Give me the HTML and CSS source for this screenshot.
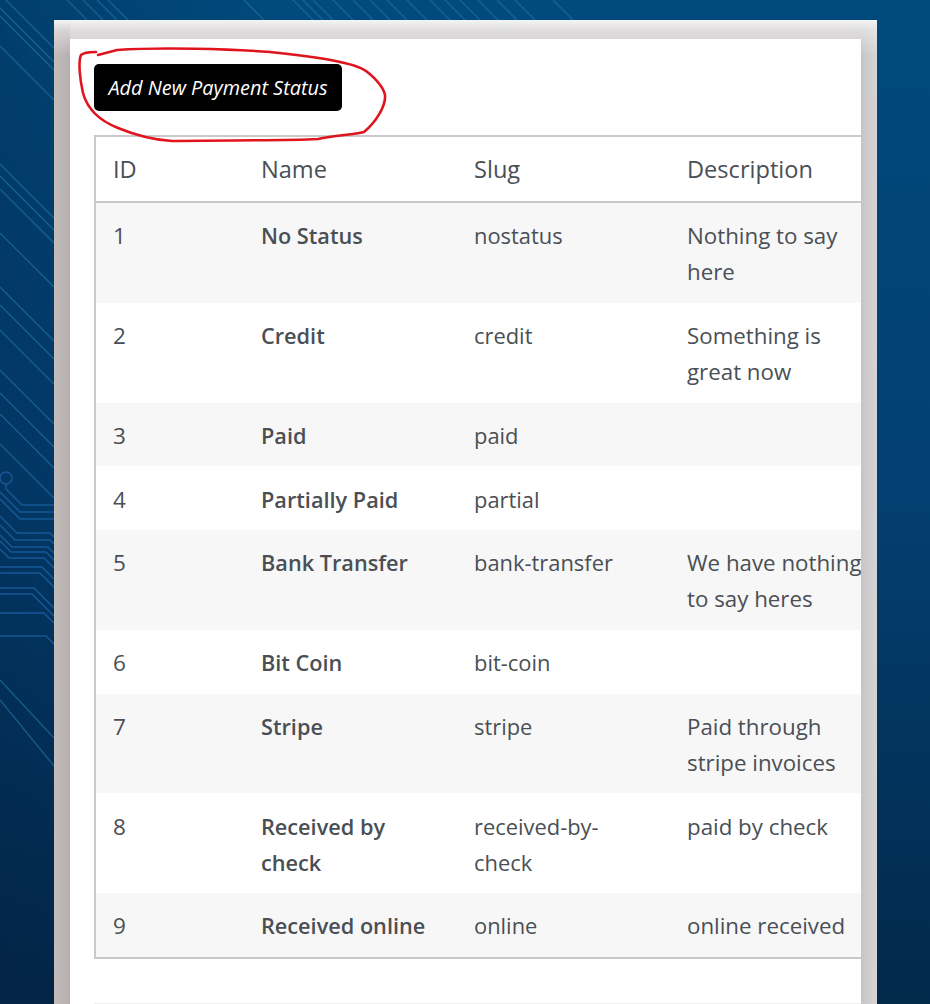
FILE: index.html
```html
<!DOCTYPE html>
<html lang="en">
<head>
<meta charset="utf-8">
<title>Payment Statuses</title>
<link rel="stylesheet" href="styles.css">
</head>
<body>
<svg class="circuit" viewBox="0 0 930 1004" width="930" height="1004" aria-hidden="true">
  <g class="trace-top">
    <path d="M67 0L87 20M83 0L103 20M97 0L117 20M108 0L128 20M244 0L264 20"/>
    <path d="M293 0L313 20M303 0L323 20M313 0L333 20M333 0L353 20M353 0L373 20M370 0L390 20M387 0L407 20M407 0L427 20M430 0L450 20M445 0L465 20M460 0L480 20M478 0L498 20M497 0L517 20M515 0L535 20M553 0L573 20"/>
    <path d="M0 -6L54 48M0 8L54 62M0 16L54 70M0 46L54 100"/>
    <path d="M0 164L54 218M0 176L54 230M0 189L54 243M0 233L54 287M0 287L54 341M0 305L54 359M0 330L54 384M0 370L54 424M0 393L54 447M0 414L54 468M0 444L54 498"/>
    <path d="M0 700L54 766M0 680L54 738"/>
  </g>
  <g class="trace-low">
    <circle cx="6" cy="478" r="6"/>
    <path d="M6 484V489L22 505H54M0 492L20 512H54M0 499L20 519H54"/>
    <path d="M0 516L17 533H50L54 537M0 525L15 540H50L54 544M0 535L12 547H48L54 553M0 541L11 552H46L54 560M0 549L9 558H44L54 568M0 567H42L54 579M0 573H40L54 587M0 588H34L54 608M0 594H32L54 616M0 613H44L54 623M0 636H46L54 644"/>
  </g>
</svg>
<main class="panel">
  <div class="card">
    <a class="add-button" href="#">Add New Payment Status</a>
    <table class="status-table">
      <colgroup>
        <col class="col-id"><col class="col-wide"><col class="col-wide"><col class="col-wide">
      </colgroup>
      <thead>
        <tr><th>ID</th><th>Name</th><th>Slug</th><th>Description</th></tr>
      </thead>
      <tbody>
        <tr><td>1</td><td class="name">No Status</td><td class="slug">nostatus</td><td class="desc">Nothing to say here</td></tr>
        <tr><td>2</td><td class="name">Credit</td><td class="slug">credit</td><td class="desc">Something is great now</td></tr>
        <tr><td>3</td><td class="name">Paid</td><td class="slug">paid</td><td class="desc"></td></tr>
        <tr><td>4</td><td class="name">Partially Paid</td><td class="slug">partial</td><td class="desc"></td></tr>
        <tr><td>5</td><td class="name">Bank Transfer</td><td class="slug">bank-transfer</td><td class="desc">We have nothing to say heres</td></tr>
        <tr><td>6</td><td class="name">Bit Coin</td><td class="slug">bit-coin</td><td class="desc"></td></tr>
        <tr><td>7</td><td class="name">Stripe</td><td class="slug">stripe</td><td class="desc">Paid through stripe invoices</td></tr>
        <tr><td>8</td><td class="name">Received by check</td><td class="slug">received-by-check</td><td class="desc">paid by check</td></tr>
        <tr><td>9</td><td class="name">Received online</td><td class="slug">online</td><td class="desc">online received</td></tr>
      </tbody>
    </table>
    <hr class="divider">
  </div>
</main>
<svg class="scribble" viewBox="0 0 930 1004" width="930" height="1004" aria-hidden="true">
  <path d="M96 52C90 52 84 52 81 55C78 62 80 80 83 93C87 108 98 120 118 128C135 135 155 140 172 141C220 140 280 141 318 139C335 135 352 135 364 132C376 122 386 106 385 95C383 85 368 70 358 67C340 60 300 55 270 52C230 49 160 47 117 50L98 55"/>
</svg>
</body>
</html>
```
FILE: styles.css
```css
* { box-sizing: border-box; }
html, body { margin: 0; height: 1004px; overflow: hidden; }
body {
  position: relative;
  padding: 20px 53px 0 54px;
  background:
    linear-gradient(90deg, rgba(0, 20, 50, .22) 0, rgba(0, 20, 50, 0) 30%),
    linear-gradient(180deg, #014a7d 0, #033f70 50%, #02284a 100%);
  font-family: "Open Sans", "Noto Sans", sans-serif;
  color: #4a4f55;
}
.circuit, .scribble { position: absolute; left: 0; top: 0; pointer-events: none; }
.trace-top { fill: none; stroke: #1f6f9e; stroke-width: 1.4; opacity: .7; }
.trace-low { fill: none; stroke: #1a5c9c; stroke-width: 1.5; opacity: .9; }
.scribble path { fill: none; stroke: #e0141e; stroke-width: 2.6; stroke-linecap: round; }
.panel {
  position: relative;
  height: 984px;
  padding: 19px 16px 0;
  overflow: hidden;
  background:
    linear-gradient(180deg, #f5f4f4 0, rgba(245, 244, 244, .5) 10px, rgba(245, 244, 244, 0) 36px) no-repeat,
    linear-gradient(90deg, #c2bcbb, #b5afae) left / 16px 100% no-repeat,
    linear-gradient(90deg, #c6c4c4, #d6d4d4) right / 16px 100% no-repeat,
    #c9c6c6;
}
.card {
  height: 100%;
  padding: 25px 0 0 24px;
  overflow: hidden;
  background: #fff;
}
.add-button {
  display: block;
  width: 248px;
  height: 47px;
  background: #000;
  border-radius: 5px;
  color: #fff;
  font-size: 19.9px;
  font-style: italic;
  line-height: 47px;
  text-align: center;
  text-decoration: none;
}
.status-table {
  width: 791px;
  margin-top: 24px;
  border: 2px solid #c9c9cb;
  border-collapse: separate;
  border-spacing: 0;
  table-layout: fixed;
  font-size: 22.5px;
  line-height: 36px;
}
.col-id { width: 148px; }
.col-wide { width: 213px; }
th, td {
  padding: 15.2px 17px 12.6px;
  text-align: left;
  vertical-align: top;
  font-weight: 400;
}
th { padding: 14px 17px; border-bottom: 2px solid #c9c9cb; font-size: 23.6px; }
.status-table td.name { font-weight: 600; font-size: 21.7px; }
.status-table td.slug { font-size: 21.9px; }
.status-table td.desc { font-size: 22.3px; }
tbody tr:nth-child(odd) { background: #f7f7f7; }
.divider {
  width: 791px;
  margin: 44px 0 0;
  border: 0;
  border-top: 1px solid #eee;
}
```
